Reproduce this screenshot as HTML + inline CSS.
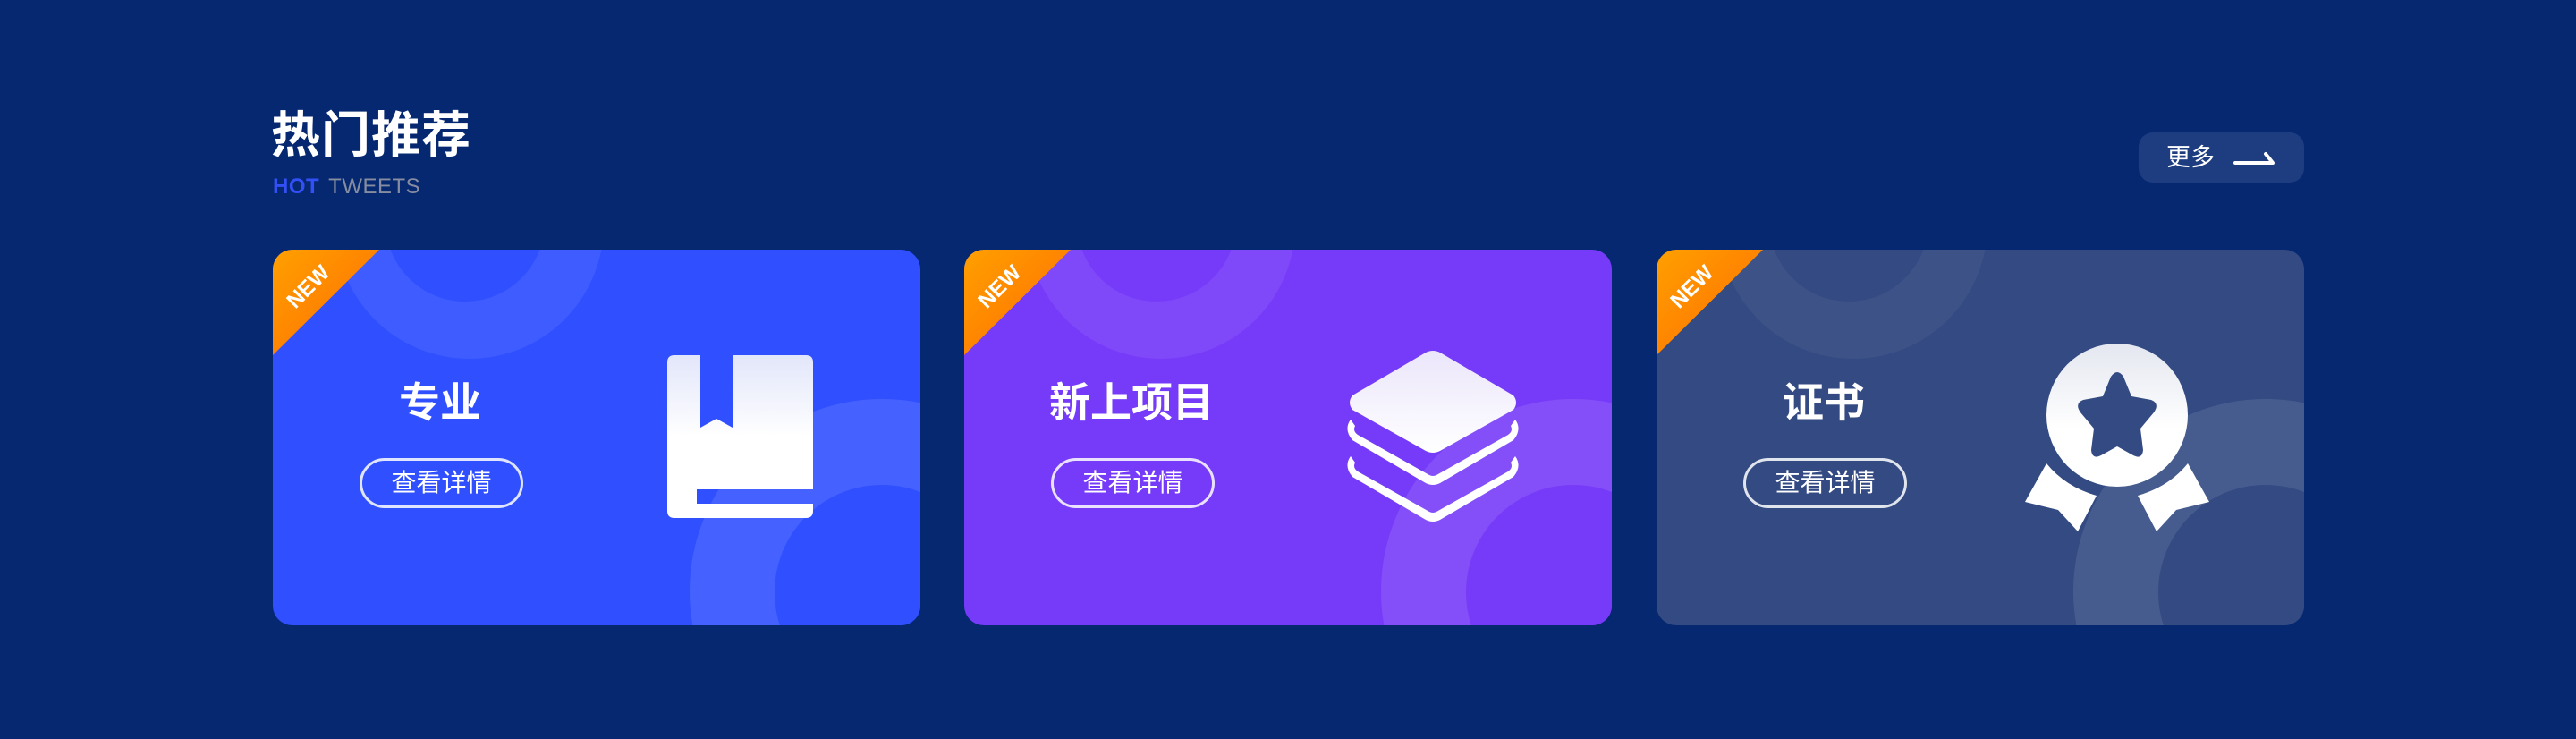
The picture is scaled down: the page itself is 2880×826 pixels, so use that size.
<!DOCTYPE html>
<html style="overflow:hidden;width:2880px;height:826px"><head><meta charset="utf-8"><style>
*{margin:0;padding:0;box-sizing:border-box}
body{width:2880px;height:826px;background:#052870;position:relative;overflow:hidden;font-family:"Liberation Sans","Noto Sans CJK SC",sans-serif;color:#fff}
.title{position:absolute;left:303px;top:116px;font-size:55px;font-weight:bold;letter-spacing:1px;line-height:70px}
.sub{position:absolute;left:305px;top:195px;font-size:24px;line-height:28px;letter-spacing:0.5px}
.sub b{color:#3350F6}.sub span{color:#868da0;margin-left:10px}
.more{position:absolute;left:2391px;top:148px;width:185px;height:56px;border-radius:16px;background:#1e3c80;font-size:27px;line-height:56px;padding-left:31px}
.more svg{position:absolute;left:106px;top:18px}
.card{position:absolute;top:279px;width:724px;height:420px;border-radius:22px;overflow:hidden}
.card .c{position:absolute;border-radius:50%}
.card h3{position:absolute;left:0;width:374px;text-align:center;top:141px;font-size:46px;line-height:60px;font-weight:bold}
.card .btn{position:absolute;left:97px;top:233px;width:183px;height:56px;border:3px solid rgba(255,255,255,.85);border-radius:28px;text-align:center;line-height:50px;font-size:28px}
.rib{position:absolute;left:0;top:0}
</style></head><body>
<div class="title">热门推荐</div>
<div class="sub"><b>HOT</b><span>TWEETS</span></div>
<div class="more">更多<svg width="48" height="20" viewBox="0 0 48 20"><path d="M2 16H44L36 6" fill="none" stroke="#fff" stroke-width="4" stroke-linecap="round" stroke-linejoin="round"/></svg></div>

<div class="card" style="left:305px;background:#3050FF">
 <div class="c" style="left:70px;top:-178px;width:300px;height:300px;background:rgba(255,255,255,.07)"></div>
 <div class="c" style="left:126px;top:-120px;width:178px;height:178px;background:#3050FF"></div>
 <div class="c" style="left:466px;top:167px;width:430px;height:430px;background:rgba(255,255,255,.1)"></div>
 <div class="c" style="left:561px;top:263px;width:240px;height:240px;background:#3050FF"></div>
 <svg class="rib" width="130" height="130" viewBox="0 0 130 130"><defs><linearGradient id="o" x1="0" y1="0" x2="1" y2="1"><stop offset="0" stop-color="#ffa000"/><stop offset="1" stop-color="#ff6a00"/></linearGradient></defs><path d="M0 0H119L0 118Z" fill="url(#o)"/><text x="38" y="50" transform="rotate(-45 38 40)" text-anchor="middle" font-family="Liberation Sans" font-weight="bold" font-size="24" fill="#fff">NEW</text></svg>
 <h3>专业</h3><div class="btn">查看详情</div>
 <svg style="position:absolute;left:441px;top:118px" width="163" height="182" viewBox="0 0 163 182"><defs><linearGradient id="w1" x1="0" y1="0" x2="0" y2="1"><stop offset="0" stop-color="#e2e6fa"/><stop offset=".5" stop-color="#fff"/></linearGradient></defs><path d="M8 0H37V81L55 71L73 81V0H155Q163 0 163 8V150H33V166H163V174Q163 182 155 182H8Q0 182 0 174V8Q0 0 8 0Z" fill="url(#w1)"/></svg>
</div>

<div class="card" style="left:1078px;background:#763BF8">
 <div class="c" style="left:70px;top:-178px;width:300px;height:300px;background:rgba(255,255,255,.07)"></div>
 <div class="c" style="left:126px;top:-120px;width:178px;height:178px;background:#763BF8"></div>
 <div class="c" style="left:466px;top:167px;width:430px;height:430px;background:rgba(255,255,255,.1)"></div>
 <div class="c" style="left:561px;top:263px;width:240px;height:240px;background:#763BF8"></div>
 <svg class="rib" width="130" height="130" viewBox="0 0 130 130"><defs><linearGradient id="o2" x1="0" y1="0" x2="1" y2="1"><stop offset="0" stop-color="#ffa000"/><stop offset="1" stop-color="#ff6a00"/></linearGradient></defs><path d="M0 0H119L0 118Z" fill="url(#o2)"/><text x="38" y="50" transform="rotate(-45 38 40)" text-anchor="middle" font-family="Liberation Sans" font-weight="bold" font-size="24" fill="#fff">NEW</text></svg>
 <h3>新上项目</h3><div class="btn">查看详情</div>
 <svg style="position:absolute;left:424px;top:113px" width="200" height="192" viewBox="0 0 200 192"><defs><linearGradient id="w2" x1="0" y1="0" x2="0" y2="1"><stop offset="0" stop-color="#ebe6fb"/><stop offset="1" stop-color="#fff"/></linearGradient></defs>
 <path d="M92 2Q100 -2 108 2L190 50Q196 58 190 66L108 112Q100 116 92 112L10 66Q4 58 10 50Z" fill="url(#w2)"/>
 <path d="M8 77Q0 88 10 100L92 148Q100 152 108 148L190 100Q200 88 192 77L187 84Q190 90 184 94L104 139Q100 141 96 139L16 94Q10 90 13 84Z" fill="#fff"/>
 <path d="M8 118Q0 129 10 141L92 189Q100 193 108 189L190 141Q200 129 192 118L187 125Q190 131 184 135L104 180Q100 182 96 180L16 135Q10 131 13 125Z" fill="#fff"/></svg>
</div>

<div class="card" style="left:1852px;background:#334A82">
 <div class="c" style="left:70px;top:-178px;width:300px;height:300px;background:rgba(255,255,255,.05)"></div>
 <div class="c" style="left:126px;top:-120px;width:178px;height:178px;background:#334A82"></div>
 <div class="c" style="left:466px;top:167px;width:430px;height:430px;background:rgba(255,255,255,.1)"></div>
 <div class="c" style="left:561px;top:263px;width:240px;height:240px;background:#334A82"></div>
 <svg class="rib" width="130" height="130" viewBox="0 0 130 130"><defs><linearGradient id="o3" x1="0" y1="0" x2="1" y2="1"><stop offset="0" stop-color="#ffa000"/><stop offset="1" stop-color="#ff6a00"/></linearGradient></defs><path d="M0 0H119L0 118Z" fill="url(#o3)"/><text x="38" y="50" transform="rotate(-45 38 40)" text-anchor="middle" font-family="Liberation Sans" font-weight="bold" font-size="24" fill="#fff">NEW</text></svg>
 <h3>证书</h3><div class="btn">查看详情</div>
 <svg style="position:absolute;left:412px;top:103px" width="206" height="214" viewBox="0 0 206 214"><defs><linearGradient id="w3" x1="0" y1="0" x2="0" y2="1"><stop offset="0" stop-color="#e4e7f0"/><stop offset=".6" stop-color="#fff"/></linearGradient></defs>
 <path d="M24 136Q45 162 80 172L59 212L37 188L0 179Z" fill="#fff"/>
 <path d="M182 136Q161 162 126 172L147 212L169 188L206 179Z" fill="#fff"/>
 <ellipse cx="103" cy="82" rx="79" ry="80" fill="url(#w3)"/>
 <path d="M96 39Q103 29 110 39L119 61L141 65Q151 69 144 79L129 97L132 121Q131 132 121 127L103 117L85 127Q75 132 74 121L77 97L62 79Q55 69 65 65L87 61Z" fill="#334A82"/></svg>
</div>
</body></html>
